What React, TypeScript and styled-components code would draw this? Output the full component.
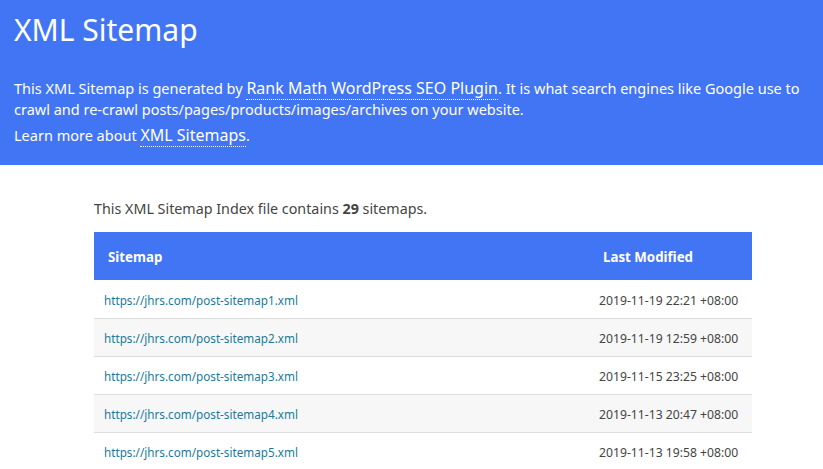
import styled, { createGlobalStyle } from 'styled-components';

const GlobalStyle = createGlobalStyle`
    body {
        margin: 0;
        background: #fff;
        font-family: "Noto Sans", "Open Sans", sans-serif;
        color: #444;
    }
`;

const Description = styled.header`
    background: #4275f4;
    color: #fff;
    padding: 8px 14px 17px;
    height: 165px;
    box-sizing: border-box;
`;

const Title = styled.h1`
    margin: 0 0 26px;
    font-size: 30px;
    font-weight: 400;
    line-height: 44px;
`;

const Intro = styled.p<{ gap?: number }>`
    margin: ${(p) => p.gap ?? 0}px 0 0;
    font-size: 14.5px;
    line-height: 21px;
`;

const DotLink = styled.a`
    color: #fff;
    text-decoration: none;
    border-bottom: 1px dotted #fff;
    font-size: 16px;
    line-height: 1;
`;

const Content = styled.main`
    width: 658px;
    margin: 0 0 0 94px;
    padding-top: 35px;
`;

const Count = styled.p`
    margin: 0 0 14px;
    font-size: 14.3px;
    line-height: 18px;
`;

const Table = styled.table`
    width: 100%;
    border-collapse: collapse;
`;

const Th = styled.th<{ w?: number }>`
    background: #4275f4;
    color: #fff;
    text-align: left;
    font-weight: 700;
    font-size: 13.3px;
    height: 48px;
    padding: 2px 14px 0;
    box-sizing: border-box;
    ${(p) => (p.w ? `width: ${p.w}px;` : '')}
`;

const Row = styled.tr<{ alt?: boolean }>`
    background: ${(p) => (p.alt ? '#f7f7f7' : '#fff')};
`;

const Td = styled.td`
    height: 38px;
    padding: 3px 10px 0;
    box-sizing: border-box;
    border-bottom: 1px solid #ddd;
    font-size: 12.2px;
`;

const Loc = styled.a`
    color: #1a7a99;
    text-decoration: none;
    font-size: 11.7px;
`;

const rows = [
    ['https://jhrs.com/post-sitemap1.xml', '2019-11-19 22:21 +08:00'],
    ['https://jhrs.com/post-sitemap2.xml', '2019-11-19 12:59 +08:00'],
    ['https://jhrs.com/post-sitemap3.xml', '2019-11-15 23:25 +08:00'],
    ['https://jhrs.com/post-sitemap4.xml', '2019-11-13 20:47 +08:00'],
    ['https://jhrs.com/post-sitemap5.xml', '2019-11-13 19:58 +08:00'],
];

function App() {
    return (
        <>
            <GlobalStyle />
            <Description>
                <Title>XML Sitemap</Title>
                <Intro>
                    This XML Sitemap is generated by <DotLink href="#">Rank Math WordPress SEO Plugin</DotLink>. It is
                    what search engines like Google use to crawl and re-crawl posts/pages/products/images/archives on
                    your website.
                </Intro>
                <Intro gap={5}>
                    Learn more about <DotLink href="#">XML Sitemaps</DotLink>.
                </Intro>
            </Description>
            <Content>
                <Count>
                    This XML Sitemap Index file contains <strong>29</strong> sitemaps.
                </Count>
                <Table>
                    <thead>
                        <tr>
                            <Th>Sitemap</Th>
                            <Th w={163}>Last Modified</Th>
                        </tr>
                    </thead>
                    <tbody>
                        {rows.map(([loc, mod], i) => (
                            <Row key={loc} alt={i % 2 === 1}>
                                <Td>
                                    <Loc href="#">{loc}</Loc>
                                </Td>
                                <Td>{mod}</Td>
                            </Row>
                        ))}
                    </tbody>
                </Table>
            </Content>
        </>
    );
}

export default App;
